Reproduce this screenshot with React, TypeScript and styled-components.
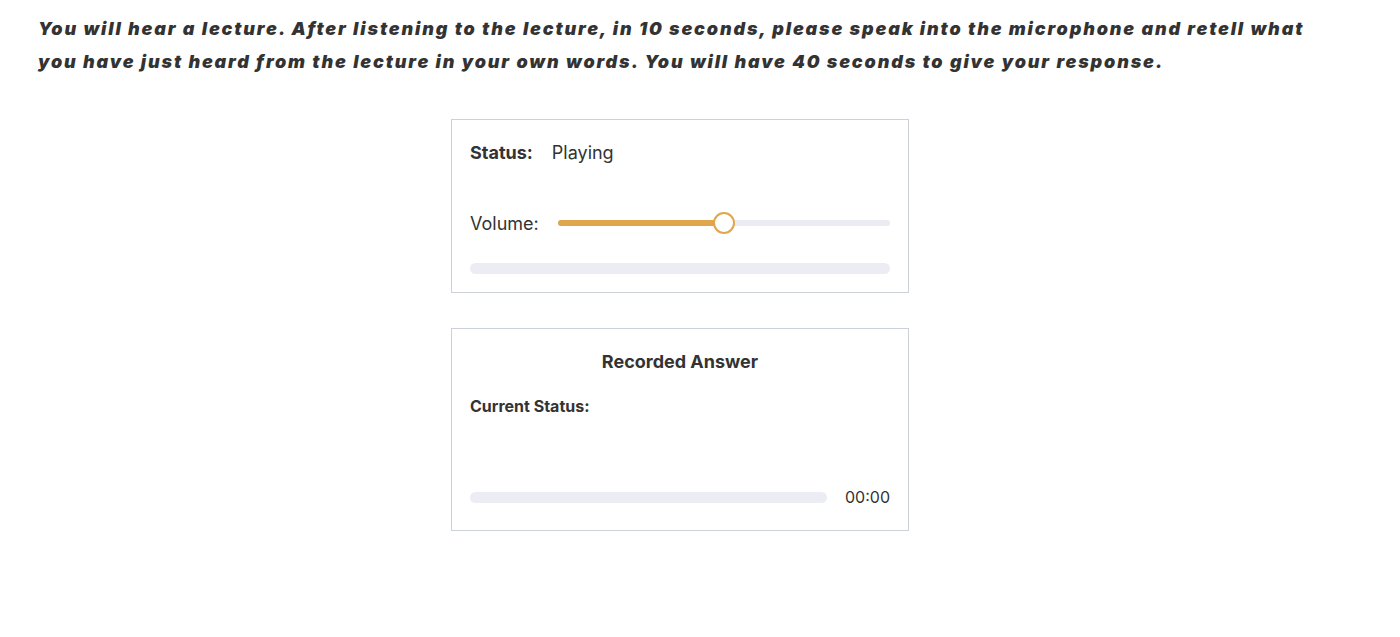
import styled, { createGlobalStyle } from "styled-components";

const GlobalStyle = createGlobalStyle`
  html, body {
    margin: 0;
    padding: 0;
    background: #fff;
    font-family: Inter, "Noto Sans", sans-serif;
    color: #333;
  }
`;

const Page = styled.div`
  width: 1400px;
  padding: 12px 40px 0 38px;
  box-sizing: border-box;
`;

const Instruction = styled.p`
  margin: 0;
  font-size: 18px;
  line-height: 33px;
  font-weight: 900;
  font-style: italic;
  letter-spacing: 1.85px;
  color: #333;
  white-space: nowrap;
`;

const Column = styled.div`
  display: flex;
  flex-direction: column;
  align-items: center;
  gap: 35px;
  margin-top: 41px;
  margin-left: -38px;
`;

const Card = styled.div`
  width: 458px;
  box-sizing: border-box;
  border: 1px solid #cdd1da;
  padding: 20px 18px 18px;
  display: flex;
  flex-direction: column;
`;

const Row = styled.div<{ $top?: number }>`
  display: flex;
  align-items: center;
  height: 24px;
  margin-top: ${(p) => p.$top ?? 0}px;
  font-size: 18px;
`;

const Label = styled.span<{ $bold?: boolean }>`
  font-weight: ${(p) => (p.$bold ? 700 : 400)};
  margin-right: 19px;
`;

const Slider = styled.div`
  position: relative;
  flex: 1;
  height: 6px;
  border-radius: 3px;
  background: #ebebf2;
`;

const SliderFill = styled.div`
  position: absolute;
  left: 0;
  top: 0;
  bottom: 0;
  border-radius: 3px;
  background: #e0a64c;
`;

const Thumb = styled.div`
  position: absolute;
  top: 50%;
  width: 22px;
  height: 22px;
  box-sizing: border-box;
  border-radius: 50%;
  border: 2px solid #e0a64c;
  background: #fff;
  transform: translate(-50%, -50%);
`;

const Track = styled.div<{ $top?: number }>`
  flex: 1 0 auto;
  height: 11px;
  border-radius: 6px;
  background: #ececf4;
  margin-top: ${(p) => p.$top ?? 0}px;
`;

const Title = styled.div`
  text-align: center;
  font-size: 18px;
  font-weight: 700;
  line-height: 24px;
  margin-top: 1px;
`;

const SubTitle = styled.div`
  margin-top: 20px;
  font-size: 16px;
  font-weight: 700;
  line-height: 24px;
`;

const ProgressRow = styled.div`
  display: flex;
  align-items: center;
  gap: 18px;
  margin-top: 67px;
  height: 24px;
  margin-bottom: 3px;
`;

const Time = styled.span`
  font-size: 16px;
`;

export default function App() {
  const volume = 50;
  return (
    <Page>
      <GlobalStyle />
      <Instruction>
        You will hear a lecture. After listening to the lecture, in 10 seconds, please speak into the microphone and retell what
        <br />
        you have just heard from the lecture in your own words. You will have 40 seconds to give your response.
      </Instruction>
      <Column>
        <Card>
          <Row>
            <Label $bold>Status:</Label>
            <span>Playing</span>
          </Row>
          <Row $top={47}>
            <Label>Volume:</Label>
            <Slider>
              <SliderFill style={{ width: `${volume}%` }} />
              <Thumb style={{ left: `${volume}%` }} />
            </Slider>
          </Row>
          <Track $top={28} />
        </Card>
        <Card>
          <Title>Recorded Answer</Title>
          <SubTitle>Current Status:</SubTitle>
          <ProgressRow>
            <Track />
            <Time>00:00</Time>
          </ProgressRow>
        </Card>
      </Column>
    </Page>
  );
}
